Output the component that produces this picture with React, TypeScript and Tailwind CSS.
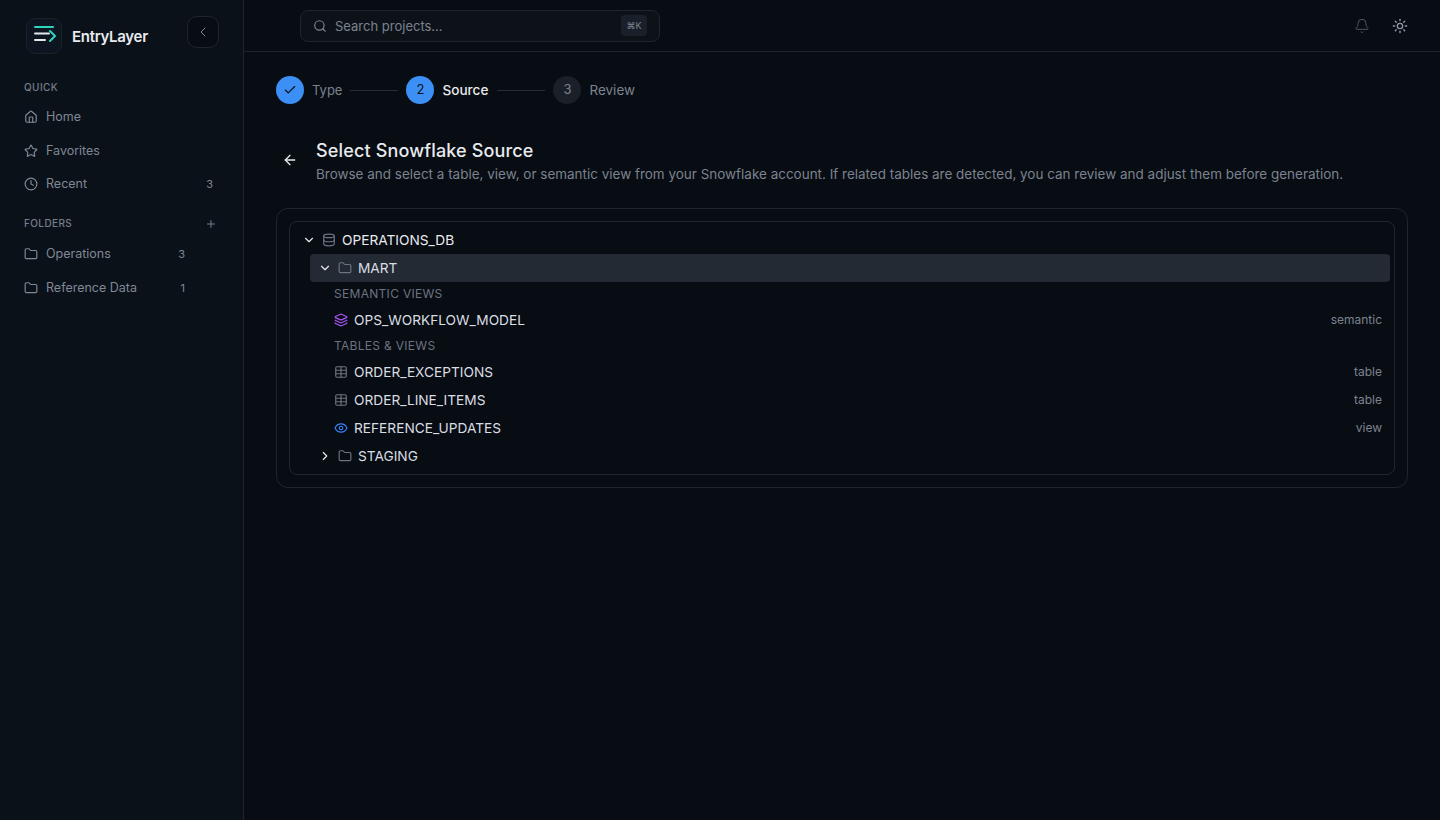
import { ArrowLeft, Bell, Check, ChevronDown, ChevronLeft, ChevronRight, Clock, Database, Eye, Folder, House, Layers, Plus, Search, Star, Sun, Table } from "lucide-react";
import type { ReactNode } from "react";

function NavItem({ icon, label, count, countClass = "mr-[28px]" }: { icon: ReactNode; label: string; count?: string; countClass?: string }) {
  return (
    <div className="flex h-[33.5px] items-center gap-2 pl-6 pr-[30px] text-[12.5px] text-[#7f8895]">
      {icon}
      <span className="flex-1 leading-none">{label}</span>
      {count && <span className={`text-[11px] text-[#7f8895] ${countClass}`}>{count}</span>}
    </div>
  );
}

function Row({ icon, label, tag }: { icon: ReactNode; label: string; tag: string }) {
  return (
    <div className="flex h-7 items-center gap-[6px] pl-10 pr-2 text-[13.7px] text-[#d9dde3]">
      {icon}
      <span className="flex-1">{label}</span>
      <span className="text-xs text-[#7b838f]">{tag}</span>
    </div>
  );
}

export default function App() {
  return (
    <div className="flex h-[820px] w-[1440px] overflow-hidden bg-[#080c13] font-['Inter',sans-serif] antialiased">
      <aside className="flex w-[244px] shrink-0 flex-col border-r border-[#1f252e] bg-[#0b1119]">
        <div className="flex h-[72px] items-start pl-[26px] pr-6 pt-[16px]">
          <div className="mt-[2px] flex h-9 w-9 items-center justify-center rounded-[10px] border border-[#1a222c] bg-[#0d1620]">
            <svg width="24" height="20" viewBox="0 0 24 20" fill="none" strokeLinecap="round" strokeLinejoin="round" strokeWidth="2" className="overflow-visible">
              <path d="M3 1h18" stroke="#2dd4bf" />
              <path d="M3 7.500h14" stroke="#e5e7eb" />
              <path d="M3 14h10" stroke="#e5e7eb" />
              <path d="M18 5l5 5-5 5" stroke="#2dd4bf" />
            </svg>
          </div>
          <span className="ml-[10px] mt-[10px] text-[15px] font-semibold tracking-[-0.3px] text-[#e8eaee]">EntryLayer</span>
          <div className="ml-auto flex h-8 w-8 items-center justify-center rounded-[10px] border border-[#1f252e] bg-[#080c13]">
            <ChevronLeft size={16} strokeWidth={1.5} className="text-[#7f8895]" />
          </div>
        </div>
        <div className="mt-[9px] flex h-[13px] items-center pl-6 text-[10px] font-medium tracking-[0.4px] text-[#757e8a]">QUICK</div>
        <div className="mt-[6.500px]">
          <NavItem icon={<House size={14} />} label="Home" />
          <NavItem icon={<Star size={14} />} label="Favorites" />
          <NavItem icon={<Clock size={14} />} label="Recent" count="3" countClass="" />
        </div>
        <div className="mt-[16px] flex h-[13px] items-center pl-6 pr-[26px] text-[10px] font-medium tracking-[0.4px] text-[#757e8a]">
          <span className="flex-1">FOLDERS</span>
          <Plus size={12} />
        </div>
        <div className="mt-[7.500px]">
          <NavItem icon={<Folder size={14} />} label="Operations" count="3" />
          <NavItem icon={<Folder size={14} />} label="Reference Data" count="1" />
        </div>
      </aside>
      <div className="flex min-w-0 flex-1 flex-col">
        <header className="flex h-[52px] shrink-0 items-center border-b border-[#1f252e] pl-14 pr-8">
          <div className="flex h-8 w-[360px] items-center gap-2 rounded-lg border border-[#1f252e] bg-[#0d1219] pl-3 pr-3 text-[13px] text-[#7b838f]">
            <Search size={14} />
            <span className="mt-[2px] flex-1">Search projects...</span>
            <span className="flex h-[21px] w-[26px] items-center justify-center rounded bg-[#1a2029] text-[9px] text-[#7b838f]">⌘K</span>
          </div>
          <div className="ml-auto flex items-center gap-[22px]">
            <Bell size={16} strokeWidth={1.5} className="text-[#4e5662]" />
            <Sun size={16} className="text-[#9099a5]" />
          </div>
        </header>
        <main className="flex-1 px-8 pt-6">
          <div className="flex h-7 items-center text-[13.500px]">
            <span className="flex h-7 w-7 items-center justify-center rounded-full bg-[#3b8ff5] text-[#0a0f17]"><Check size={14} /></span>
            <span className="ml-2 mt-[1px] text-[13px] text-[#7b838f]">Type</span>
            <span className="mx-2 h-px w-12 bg-[#272d36]" />
            <span className="flex h-7 w-7 items-center justify-center rounded-full bg-[#3b8ff5] text-[13px] text-[#0a0f17]">2</span>
            <span className="ml-2 text-[13.6px] font-medium text-[#e8eaee]">Source</span>
            <span className="ml-[9px] mr-2 h-px w-12 bg-[#272d36]" />
            <span className="flex h-7 w-7 items-center justify-center rounded-full bg-[#1b2028] text-[13px] text-[#7b838f]">3</span>
            <span className="ml-2 text-[#7b838f]">Review</span>
          </div>
          <div className="mt-[34px] flex items-center">
            <div className="mb-1 flex w-[40px] items-center pl-[6px]"><ArrowLeft size={16} className="text-[#e8eaee]" /></div>
            <div>
              <h1 className="mt-[1px] text-[18px] font-medium leading-[23px] tracking-[0.15px] text-[#e8eaee]">Select Snowflake Source</h1>
              <p className="text-[13.470px] leading-[24px] text-[#7b838f]">Browse and select a table, view, or semantic view from your Snowflake account. If related tables are detected, you can review and adjust them before generation.</p>
            </div>
          </div>
          <div className="mt-[22px] rounded-xl border border-[#1f252e] p-3">
            <div className="rounded-lg border border-[#1f252e] p-1">
              <div className="flex h-7 items-center gap-[6px] pl-2 text-[13.7px] text-[#e8eaee]">
                <ChevronDown size={14} />
                <Database size={14} className="text-[#6b7480]" />
                <span>OPERATIONS_DB</span>
              </div>
              <div className="ml-4 flex h-7 items-center gap-[6px] rounded bg-[#232a34] pl-2 text-[13.7px] text-[#d9dde3]">
                <ChevronDown size={14} className="text-[#e8eaee]" />
                <Folder size={14} className="text-[#6b7480]" />
                <span>MART</span>
              </div>
              <div className="flex h-6 items-center pl-10 text-xs tracking-[0.3px] text-[#6b7480]">SEMANTIC VIEWS</div>
              <Row icon={<Layers size={14} className="text-[#a855f7]" />} label="OPS_WORKFLOW_MODEL" tag="semantic" />
              <div className="flex h-6 items-center pl-10 text-xs tracking-[0.3px] text-[#6b7480]">TABLES &amp; VIEWS</div>
              <Row icon={<Table size={14} className="text-[#6b7480]" />} label="ORDER_EXCEPTIONS" tag="table" />
              <Row icon={<Table size={14} className="text-[#6b7480]" />} label="ORDER_LINE_ITEMS" tag="table" />
              <Row icon={<Eye size={14} className="text-[#3b82f6]" />} label="REFERENCE_UPDATES" tag="view" />
              <div className="ml-4 flex h-7 items-center gap-[6px] pl-2 text-[13.7px] text-[#d9dde3]">
                <ChevronRight size={14} className="text-[#e8eaee]" />
                <Folder size={14} className="text-[#6b7480]" />
                <span>STAGING</span>
              </div>
            </div>
          </div>
        </main>
      </div>
    </div>
  );
}
